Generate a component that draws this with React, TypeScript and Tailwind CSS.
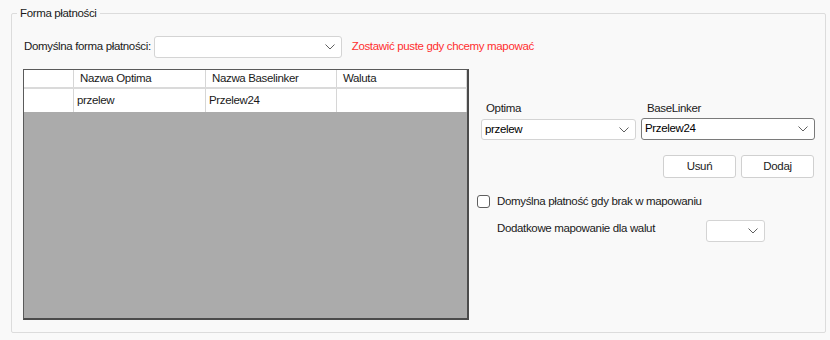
import { ReactNode } from 'react';

const FONT = "font-['Liberation_Sans',Arial,sans-serif]";

function Chevron() {
  return (
    <svg width="10" height="6" viewBox="0 0 10 6" className="shrink-0">
      <path d="M0.5 0.5 L5 5 L9.5 0.5" fill="none" stroke="#606060" strokeWidth="1" />
    </svg>
  );
}

function Combo({ value, className, focused }: { value?: string; className: string; focused?: boolean }) {
  return (
    <div
      className={`flex items-center justify-between rounded-[3px] border bg-white pl-[3px] pr-[6px] ${
        focused ? 'border-[#7a7a7a]' : 'border-[#d4d4d4]'
      } ${className}`}
    >
      <span className="text-[#000] leading-none">{value}</span>
      <Chevron />
    </div>
  );
}

function Button({ children }: { children: ReactNode }) {
  return (
    <div className="flex h-[23px] w-[73px] items-center justify-center rounded-[3px] border border-[#d0d0d0] bg-white">
      {children}
    </div>
  );
}

const COLS = [
  { w: 'w-[50px]', head: '', cell: '' },
  { w: 'w-[132px]', head: 'Nazwa Optima', cell: 'przelew' },
  { w: 'w-[131px]', head: 'Nazwa Baselinker', cell: 'Przelew24' },
  { w: 'w-[130px]', head: 'Waluta', cell: '' },
];

export default function App() {
  return (
    <div
      className={`h-[340px] w-[830px] bg-[#f9f9f9] pl-[11px] pr-[4px] pt-[6px] text-[11.5px] tracking-[-0.35px] text-[#1a1a1a] ${FONT}`}
    >
      <fieldset className="m-0 block h-[327px] rounded-[2px] border border-[#dcdcdc] p-0">
        <legend className="ml-[5px] px-[3px] leading-[14px]">Forma płatności</legend>

        <div className="ml-[12px] mt-[16px] flex items-center">
          <span>Domyślna forma płatności:</span>
          <Combo className="ml-[3px] h-[22px] w-[188px]" />
          <span className="ml-[10px] text-[#ff2f2f]">Zostawić puste gdy chcemy mapować</span>
        </div>

        <div className="mt-[11px] flex">
          <div className="ml-[11px] flex h-[251px] w-[446px] flex-col border-b-2 border-l border-r-2 border-t border-b-[#4b4b4b] border-l-[#5a5a5a] border-r-[#4b4b4b] border-t-[#5a5a5a] bg-[#ababab]">
            <div className="flex h-[19px] border-b-2 border-[#dadada] bg-white">
              {COLS.map((c, i) => (
                <div key={i} className={`${c.w} flex items-center border-r border-[#d6d6d6] pl-[6px]`}>
                  {c.head}
                </div>
              ))}
            </div>
            <div className="flex h-[23px] bg-white">
              {COLS.map((c, i) => (
                <div key={i} className={`${c.w} flex items-center border-r border-[#d6d6d6] pl-[3px]`}>
                  {c.cell}
                </div>
              ))}
            </div>
          </div>

          <div className="ml-[8px] flex w-[340px] flex-col">
            <div className="mt-[32px] flex">
              <div className="ml-[4px] flex w-[160px] flex-col">
                <span className="pl-[5px] leading-[14px]">Optima</span>
                <Combo value="przelew" className="mt-[4px] h-[21px] w-[155px]" />
              </div>
              <div className="flex flex-col">
                <span className="pl-[6px] leading-[14px]">BaseLinker</span>
                <Combo value="Przelew24" focused className="mt-[3px] h-[22px] w-[174px]" />
              </div>
            </div>
            <div className="mt-[15px] flex justify-end gap-[5px] pr-[3px]">
              <Button>Usuń</Button>
              <Button>Dodaj</Button>
            </div>
            <div className="mt-[15px] flex items-center">
              <div className="h-[13px] w-[13px] rounded-[3px] border border-[#5f5f5f] bg-white" />
              <span className="ml-[7px]">Domyślna płatność gdy brak w mapowaniu</span>
            </div>
            <div className="mt-[10px] flex items-start">
              <span className="ml-[20px] mt-[1px] w-[209px] leading-[14px]">Dodatkowe mapowanie dla walut</span>
              <Combo className="h-[22px] w-[59px]" />
            </div>
          </div>
        </div>
      </fieldset>
    </div>
  );
}
